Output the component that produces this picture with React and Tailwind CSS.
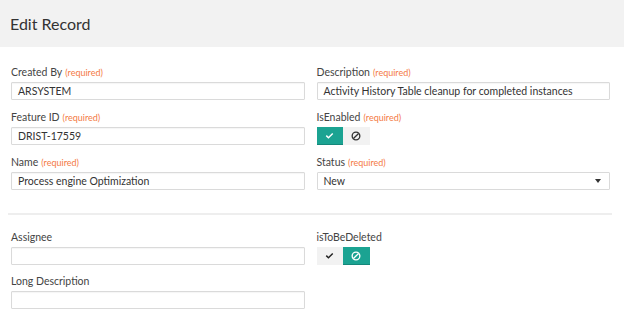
import React from 'react';

const CheckIcon = ({ className }) => (
  <svg viewBox="0 0 12 10" className={className} fill="currentColor">
    <path d="M1 5.2 2.4 3.8 4.6 6 9.6 1 11 2.4 4.6 8.8Z" />
  </svg>
);

const BanIcon = ({ className }) => (
  <svg viewBox="0 0 12 12" className={className} fill="none" stroke="currentColor" strokeWidth="1.6">
    <circle cx="6" cy="6" r="4.6" />
    <path d="M2.9 9.1 9.1 2.9" />
  </svg>
);

function Label({ text, required }) {
  return (
    <div className="h-4 leading-4 text-[10.5px] text-[#444] mb-[2px] whitespace-nowrap">
      {text}
      {required && <span className="text-[9px] text-[#f47a45] ml-[3px]">(required)</span>}
    </div>
  );
}

function TextField({ label, required, value }) {
  return (
    <div>
      <Label text={label} required={required} />
      <div className="h-[18px] border border-[#dadada] rounded-[1px] bg-white shadow-[inset_0_1px_1px_rgba(0,0,0,0.04)] px-[6px] text-[10.5px] leading-4 text-[#333] whitespace-nowrap overflow-hidden">
        {value}
      </div>
    </div>
  );
}

function Toggle({ label, required, on }) {
  return (
    <div>
      <Label text={label} required={required} />
      <div className="flex h-[18px]">
        <div className={`w-[26px] h-[18px] flex items-center justify-center ${on ? 'bg-[#1ba392] text-white border-b border-[#14877a]' : 'bg-[#f2f2f2] text-[#222]'}`}>
          <CheckIcon className="w-[9px] h-[8px]" />
        </div>
        <div className={`w-[27px] h-[18px] flex items-center justify-center ${on ? 'bg-[#f2f2f2] text-[#333]' : 'bg-[#1ba392] text-white border-b border-[#14877a]'}`}>
          <BanIcon className="w-[10px] h-[10px]" />
        </div>
      </div>
    </div>
  );
}

function SelectField({ label, required, value }) {
  return (
    <div>
      <Label text={label} required={required} />
      <div className="h-[18px] border border-[#dadada] rounded-[1px] bg-white px-[6px] text-[10.5px] leading-4 text-[#333] flex items-center justify-between">
        <span>{value}</span>
        <span className="w-0 h-0 border-l-[3px] border-r-[3px] border-t-[4px] border-l-transparent border-r-transparent border-t-[#333] mr-[2px]" />
      </div>
    </div>
  );
}

export default function App() {
  return (
    <div className="w-[624px] h-[326px] bg-white overflow-hidden" style={{ fontFamily: 'Lato, sans-serif' }}>
      {/* Header */}
      <div className="h-[47px] bg-[#f2f2f2] flex items-center px-[10px]">
        <h1 className="text-[16px] text-[#333] leading-none">Edit Record</h1>
      </div>

      {/* Required fields */}
      <div className="pt-[17px] pl-[11px] pr-[14px] grid grid-cols-2 gap-x-3 gap-y-[9px]">
        <TextField label="Created By" required value="ARSYSTEM" />
        <TextField label="Description" required value="Activity History Table cleanup for completed instances" />
        <TextField label="Feature ID" required value="DRIST-17559" />
        <Toggle label="IsEnabled" required on />
        <TextField label="Name" required value="Process engine Optimization" />
        <SelectField label="Status" required value="New" />
      </div>

      <div className="mx-[8px] mr-[12px] mt-[23px] h-[2px] bg-[#eeeeee]" />

      {/* Optional fields */}
      <div className="pt-[14px] pl-[11px] pr-[14px] grid grid-cols-2 gap-x-3 gap-y-[8px]">
        <TextField label="Assignee" value="" />
        <Toggle label="isToBeDeleted" on={false} />
        <TextField label="Long Description" value="" />
      </div>
    </div>
  );
}
